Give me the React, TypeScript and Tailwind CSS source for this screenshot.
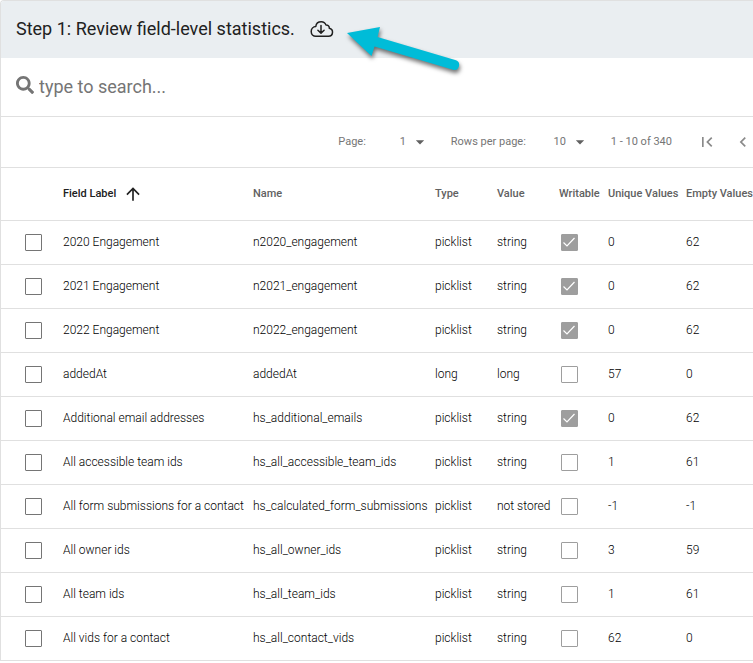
import React, { useState } from 'react';
import { FaSearch } from 'react-icons/fa';
import { MdArrowDropDown, MdArrowUpward, MdChevronLeft, MdFirstPage } from 'react-icons/md';

interface FieldRow {
    label: string;
    name: string;
    type: string;
    value: string;
    writable: boolean;
    unique: number;
    empty: number;
}

const rows: FieldRow[] = [
    { label: '2020 Engagement', name: 'n2020_engagement', type: 'picklist', value: 'string', writable: true, unique: 0, empty: 62 },
    { label: '2021 Engagement', name: 'n2021_engagement', type: 'picklist', value: 'string', writable: true, unique: 0, empty: 62 },
    { label: '2022 Engagement', name: 'n2022_engagement', type: 'picklist', value: 'string', writable: true, unique: 0, empty: 62 },
    { label: 'addedAt', name: 'addedAt', type: 'long', value: 'long', writable: false, unique: 57, empty: 0 },
    { label: 'Additional email addresses', name: 'hs_additional_emails', type: 'picklist', value: 'string', writable: true, unique: 0, empty: 62 },
    { label: 'All accessible team ids', name: 'hs_all_accessible_team_ids', type: 'picklist', value: 'string', writable: false, unique: 1, empty: 61 },
    { label: 'All form submissions for a contact', name: 'hs_calculated_form_submissions', type: 'picklist', value: 'not stored', writable: false, unique: -1, empty: -1 },
    { label: 'All owner ids', name: 'hs_all_owner_ids', type: 'picklist', value: 'string', writable: false, unique: 3, empty: 59 },
    { label: 'All team ids', name: 'hs_all_team_ids', type: 'picklist', value: 'string', writable: false, unique: 1, empty: 61 },
    { label: 'All vids for a contact', name: 'hs_all_contact_vids', type: 'picklist', value: 'string', writable: false, unique: 62, empty: 0 },
];

const CloudDownloadIcon = () => (
    <svg width="24" height="18" viewBox="0 0 24 18" fill="none" stroke="currentColor" strokeWidth="1.5" strokeLinecap="round" strokeLinejoin="round">
        <path d="M5.800 16.300h12.700a4.100 4.100 0 0 0 .8-8.100c.1-2-1.500-3.400-3.300-3.200C15.200 2.900 13.400 1.700 11.300 1.700 8.400 1.700 6.100 3.700 5.800 6.500 3.300 6.600 1.200 8.700 1.200 11.500c0 2.700 2 4.800 4.600 4.800z" />
        <path d="M11 5.500v7.500M7.900 10.200l3.100 2.900 3.100-2.900" />
    </svg>
);

// Arrow that points at the download button
const PointerArrow = () => (
    <svg className="pointer-events-none absolute top-[19px] left-[339px] drop-shadow-[1px_3px_2px_rgba(0,0,0,0.55)]" width="130" height="60" viewBox="340 20 130 60">
        <path d="M347 33 380 27 377.500 37 456 60.300a5 5 0 0 1-3 9.500L374.500 46.500 371.500 56z" fill="#00bcd8" />
    </svg>
);

const PageSelect: React.FC<{ label: string; options: string[] }> = ({ label, options }) => (
    <label className="flex items-center">
        {label}
        <span className="relative ml-5 flex items-center">
            <select className="h-8 w-10 appearance-none bg-transparent pr-5 text-right outline-none">
                {options.map((o) => <option key={o}>{o}</option>)}
            </select>
            <MdArrowDropDown size={20} className="pointer-events-none absolute -right-1 text-[#616161]" />
        </span>
    </label>
);

const CheckBox: React.FC<{ label: string; checked: boolean; disabled?: boolean; onChange?: () => void }> = ({ label, checked, disabled, onChange }) => (
    <span className="relative block h-[17px] w-[17px]">
        <input
            type="checkbox"
            aria-label={label}
            checked={checked}
            disabled={disabled}
            readOnly={!onChange}
            onChange={onChange}
            className="block h-[17px] w-[17px] appearance-none rounded-[1px] border border-[#757575] bg-white checked:border-[#9e9e9e] checked:bg-[#9e9e9e] disabled:border-[#9e9e9e]"
        />
        {checked && (
            <svg className="pointer-events-none absolute inset-0" width="17" height="17" viewBox="0 0 17 17" fill="none" stroke="#fff" strokeWidth="1.200">
                <path d="M2.500 8.500 6 12 13.500 4" />
            </svg>
        )}
    </span>
);

export default function App() {
    const [search, setSearch] = useState('');
    const [selected, setSelected] = useState<string[]>([]);

    const toggle = (name: string) =>
        setSelected((prev) => (prev.includes(name) ? prev.filter((n) => n !== name) : [...prev, name]));

    const visible = rows.filter((r) => r.label.toLowerCase().includes(search.toLowerCase()));

    return (
        <div className="relative overflow-hidden rounded-tl-sm border-t border-l border-[#e0e0e0] bg-white font-[Roboto,sans-serif] text-[#212121]">
            <header className="flex h-[57px] items-center bg-[#eaeef1] px-[15px] pb-0.5">
                <h1 className="text-[18px] leading-6">Step 1: Review field-level statistics.</h1>
                <button type="button" aria-label="Download" className="ml-[15px]">
                    <CloudDownloadIcon />
                </button>
            </header>
            <PointerArrow />

            <div className="flex h-[59px] items-center border-b border-[#e0e0e0] px-[15px]">
                <FaSearch size={18} className="mb-1 text-[#757575]" />
                <input
                    type="text"
                    aria-label="Search"
                    placeholder="type to search..."
                    value={search}
                    onChange={(e) => setSearch(e.target.value)}
                    className="ml-[5px] flex-1 text-[18px] leading-6 outline-none placeholder:text-[#757575]"
                />
            </div>

            <div className="flex h-[51px] items-center justify-end border-b border-[#e0e0e0] text-[11px] text-[#757575]">
                <PageSelect label="Page:" options={['1', '2', '3']} />
                <div className="ml-[25px]">
                    <PageSelect label="Rows per page:" options={['10', '25', '50']} />
                </div>
                <span className="ml-[25px]">1 - 10 of 340</span>
                <button type="button" aria-label="First page" className="ml-[25px] text-[#8a8a8a]">
                    <MdFirstPage size={20} />
                </button>
                <button type="button" aria-label="Previous page" className="ml-4 text-[#8a8a8a]">
                    <MdChevronLeft size={20} />
                </button>
            </div>

            <table className="w-full table-fixed text-left text-[12px] whitespace-nowrap">
                <colgroup>
                    <col className="w-[62px]" />
                    <col className="w-[190px]" />
                    <col className="w-[182px]" />
                    <col className="w-[62px]" />
                    <col className="w-[62px]" />
                    <col className="w-[49px]" />
                    <col className="w-[78px]" />
                    <col />
                </colgroup>
                <thead>
                    <tr className="h-[52px] border-b border-[#e0e0e0] text-[11px] text-[#616161]">
                        <th />
                        <th className="font-medium text-[#212121]" aria-sort="ascending">
                            <button type="button" className="flex items-center gap-[7px]">
                                Field Label <MdArrowUpward size={20} />
                            </button>
                        </th>
                        <th className="font-medium">Name</th>
                        <th className="font-medium">Type</th>
                        <th className="font-medium">Value</th>
                        <th className="font-medium">Writable</th>
                        <th className="font-medium">Unique Values</th>
                        <th className="font-medium">Empty Values</th>
                    </tr>
                </thead>
                <tbody className="font-light text-black">
                    {visible.map((r) => (
                        <tr key={r.name} className="h-11 border-b border-[#e0e0e0]">
                            <td className="pl-6">
                                <CheckBox label={`Select ${r.label}`} checked={selected.includes(r.name)} onChange={() => toggle(r.name)} />
                            </td>
                            <td>{r.label}</td>
                            <td>{r.name}</td>
                            <td>{r.type}</td>
                            <td>{r.value}</td>
                            <td className="pl-0.5">
                                <CheckBox label={`${r.label} writable`} checked={r.writable} disabled />
                            </td>
                            <td>{r.unique}</td>
                            <td>{r.empty}</td>
                        </tr>
                    ))}
                </tbody>
            </table>
        </div>
    );
}
